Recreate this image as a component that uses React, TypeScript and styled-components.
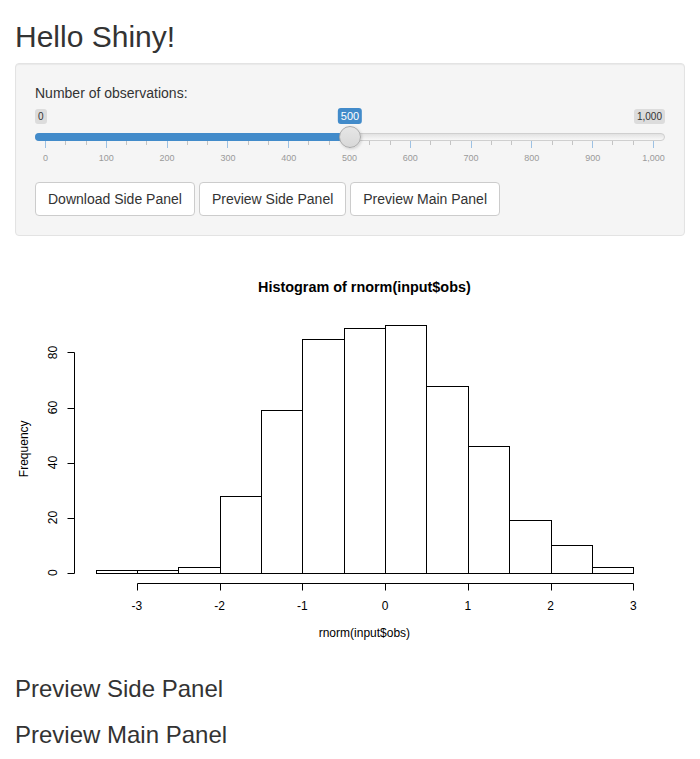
import React from "react";
import styled, { createGlobalStyle } from "styled-components";

const GlobalStyle = createGlobalStyle`
  * { box-sizing: border-box; }
  body {
    margin: 0;
    font-family: "Liberation Sans", Helvetica, Arial, sans-serif;
    font-size: 14px;
    line-height: 1.42857;
    color: #333;
    background: #fff;
  }
`;

const Page = styled.div`
  padding: 0 15px;
`;

const Title = styled.h2`
  margin: 20px 0 10px;
  font-size: 30px;
  font-weight: 500;
  line-height: 1.1;
`;

const Well = styled.div`
  background: #f5f5f5;
  border: 1px solid #e3e3e3;
  border-radius: 4px;
  box-shadow: inset 0 1px 1px rgba(0, 0, 0, 0.05);
  padding: 19px;
  margin-bottom: 20px;
`;

const FormGroup = styled.div`
  margin-bottom: 15px;
`;

const FieldLabel = styled.label`
  display: block;
  margin-bottom: 5px;
  font-weight: 400;
  line-height: 20px;
`;

const LabelRow = styled.div`
  position: relative;
  height: 17px;
  display: flex;
  justify-content: space-between;
  align-items: flex-start;
`;

const EndLabel = styled.span`
  margin-top: 1px;
  font-size: 10px;
  line-height: 13px;
  padding: 1px 3px;
  background: rgba(0, 0, 0, 0.1);
  border-radius: 3px;
  color: #333;
`;

const ValueLabel = styled.span`
  position: absolute;
  top: 0;
  transform: translateX(-50%);
  font-size: 11px;
  line-height: 14px;
  padding: 1px 3px;
  background: #428bca;
  color: #fff;
  border-radius: 3px;
`;

const Track = styled.div`
  position: relative;
  margin-top: 8px;
  height: 8px;
  border: 1px solid #cfcfcf;
  border-radius: 8px;
  background: linear-gradient(to bottom, #e2e2e2, #f8f8f8);
`;

const Fill = styled.div`
  position: absolute;
  left: -1px;
  top: -1px;
  bottom: -1px;
  background: #428bca;
  border-radius: 4px 0 0 4px;
`;

const Handle = styled.div`
  position: absolute;
  top: -8px;
  width: 22px;
  height: 22px;
  margin-left: -11px;
  border-radius: 50%;
  border: 1px solid #ababab;
  background: linear-gradient(to bottom, #e6e6e6, #d8d8d8);
  box-shadow: 1px 1px 3px rgba(0, 0, 0, 0.15);
`;

const Grid = styled.div`
  display: flex;
  justify-content: space-between;
  height: 26px;
  margin: 0 11px 0 10px;
`;

const TickCol = styled.div`
  width: 1px;
  display: flex;
  flex-direction: column;
  align-items: center;
`;

const Tick = styled.div<{ $major: boolean }>`
  width: 1px;
  height: ${(p) => (p.$major ? 7 : 4)}px;
  background: ${(p) => (p.$major ? "#9dc1e3" : "#c4c4c4")};
`;

const TickLabel = styled.span`
  margin-top: 5px;
  font-size: 9px;
  line-height: 11px;
  color: #9a9a9a;
  white-space: nowrap;
`;

const ButtonRow = styled.div`
  display: flex;
  gap: 4px;
`;

const Button = styled.button`
  font-family: inherit;
  font-size: 14px;
  line-height: 20px;
  padding: 6px 12px;
  color: #333;
  background: #fff;
  border: 1px solid #ccc;
  border-radius: 4px;
`;

const PlotFrame = styled.div`
  height: 400px;
`;

const Heading = styled.h3`
  margin: 20px 0 10px;
  font-size: 24px;
  font-weight: 500;
  line-height: 1.1;
`;

const fmt = (n: number) => n.toLocaleString("en-US");

function Slider({ min, max, value }: { min: number; max: number; value: number }) {
  const pct = ((value - min) / (max - min)) * 100;
  const ticks = Array.from({ length: 31 }, (_, i) => i);
  return (
    <div>
      <LabelRow>
        <EndLabel>{fmt(min)}</EndLabel>
        <ValueLabel style={{ left: `${pct}%` }}>{fmt(value)}</ValueLabel>
        <EndLabel>{fmt(max)}</EndLabel>
      </LabelRow>
      <Track>
        <Fill style={{ width: `calc(${pct}% + 1px)` }} />
        <Handle style={{ left: `${pct}%` }} />
      </Track>
      <Grid>
        {ticks.map((i) => {
          const major = i % 3 === 0;
          return (
            <TickCol key={i}>
              <Tick $major={major} />
              {major && <TickLabel>{fmt(min + ((max - min) * i) / 30)}</TickLabel>}
            </TickCol>
          );
        })}
      </Grid>
    </div>
  );
}

const counts = [1, 1, 2, 28, 59, 85, 89, 90, 68, 46, 19, 10, 2];
const xd = (v: number) => 59.04 + (v + 3.76) * 82.72;
const yd = (c: number) => 326.56 - (c + 3.6) * 2.752;
const r = (n: number) => Math.round(n) + 0.5;

function Histogram() {
  const base = r(yd(0));
  const xAxisY = r(326.56);
  const yAxisX = r(59.04);
  const font = '"Liberation Sans", Helvetica, Arial, sans-serif';
  return (
    <svg width="100%" height="400" viewBox="0 0 670 400" fontFamily={font}>
      <text x={349.4} y={36} textAnchor="middle" fontSize="14.4" fontWeight="bold" fill="#000">
        Histogram of rnorm(input$obs)
      </text>
      {counts.map((c, i) => {
        const x0 = r(xd(-3.5 + 0.5 * i));
        const x1 = r(xd(-3 + 0.5 * i));
        const y = r(yd(c));
        return (
          <rect key={i} x={x0} y={y} width={x1 - x0} height={base - y} fill="#fff" stroke="#000" strokeWidth="1" />
        );
      })}
      <line x1={r(xd(-3))} x2={r(xd(3))} y1={xAxisY} y2={xAxisY} stroke="#000" />
      {[-3, -2, -1, 0, 1, 2, 3].map((v) => (
        <g key={v}>
          <line x1={r(xd(v))} x2={r(xd(v))} y1={xAxisY} y2={xAxisY + 7} stroke="#000" />
          <text x={xd(v)} y={354} textAnchor="middle" fontSize="12" fill="#000">
            {v}
          </text>
        </g>
      ))}
      <line x1={yAxisX} x2={yAxisX} y1={r(yd(0))} y2={r(yd(80))} stroke="#000" />
      {[0, 20, 40, 60, 80].map((v) => (
        <g key={v}>
          <line x1={yAxisX - 7} x2={yAxisX} y1={r(yd(v))} y2={r(yd(v))} stroke="#000" />
          <text
            x={0}
            y={0}
            transform={`translate(42 ${yd(v)}) rotate(-90)`}
            textAnchor="middle"
            fontSize="12"
            fill="#000"
          >
            {v}
          </text>
        </g>
      ))}
      <text x={349.4} y={381} textAnchor="middle" fontSize="12" fill="#000">
        rnorm(input$obs)
      </text>
      <text
        x={0}
        y={0}
        transform={`translate(13 ${(59.04 + 326.56) / 2}) rotate(-90)`}
        textAnchor="middle"
        fontSize="12"
        fill="#000"
      >
        Frequency
      </text>
    </svg>
  );
}

export default function App() {
  return (
    <>
      <GlobalStyle />
      <Page>
        <Title>Hello Shiny!</Title>
        <Well>
          <FormGroup>
            <FieldLabel>Number of observations:</FieldLabel>
            <Slider min={0} max={1000} value={500} />
          </FormGroup>
          <ButtonRow>
            <Button>Download Side Panel</Button>
            <Button>Preview Side Panel</Button>
            <Button>Preview Main Panel</Button>
          </ButtonRow>
        </Well>
        <PlotFrame>
          <Histogram />
        </PlotFrame>
        <Heading>Preview Side Panel</Heading>
        <Heading>Preview Main Panel</Heading>
      </Page>
    </>
  );
}
